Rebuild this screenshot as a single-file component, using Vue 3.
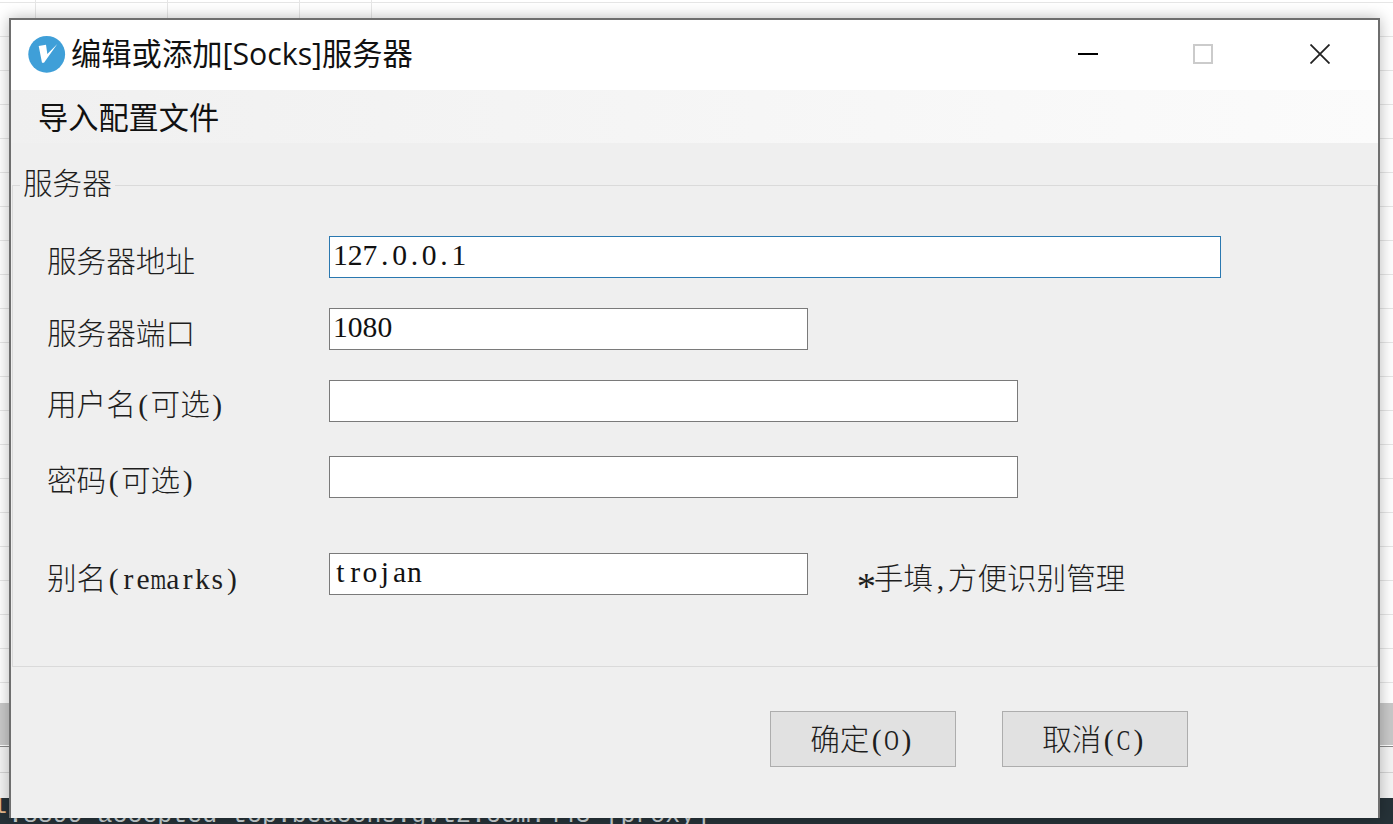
<template>
  <div class="desktop">
    <div class="sheet"></div>
    <div class="tabbar"></div>
    <div class="statusbar"></div>
    <div class="terminal">
      <span class="prev-char">l</span>
      <span class="log-line">.8899 accepted tcp.beacons.gvt2.com:443 [proxy]</span>
    </div>

    <div class="window">
      <div class="titlebar">
        <svg class="logo" width="38" height="38" viewBox="0 0 38 38">
          <circle cx="18.7" cy="19.3" r="18.4" fill="#3f9fd8" />
          <path d="M10.7 11 L18 9.7 L19.3 19 L29.3 9 L16 27.7 L14 27.7 Z" fill="#fff" />
        </svg>
        <span class="title">编辑或添加[Socks]服务器</span>
        <div class="controls">
          <div class="ctl ctl-min"><span class="min-line"></span></div>
          <div class="ctl ctl-max"><span class="max-box"></span></div>
          <div class="ctl ctl-close">
            <svg width="20" height="20" viewBox="0 0 20 20">
              <path d="M0.5 0.5 L19.5 19.5 M19.5 0.5 L0.5 19.5" stroke="#222" stroke-width="1.8" fill="none" />
            </svg>
          </div>
        </div>
      </div>

      <div class="menubar">
        <span class="menu-item">导入配置文件</span>
      </div>

      <div class="content">
        <fieldset class="group">
          <legend>服务器</legend>
          <div v-for="row in rows" :key="row.id" class="row" :class="row.id">
            <label class="label"><span v-for="(c, i) in row.label" :key="i" :class="charClass(c)">{{ c }}</span></label>
            <div class="field" :class="row.field"><span v-for="(c, i) in row.value" :key="i" :class="charClass(c)">{{ c }}</span></div>
            <span v-if="row.note" class="note"><span v-for="(c, i) in row.note" :key="i" :class="charClass(c)">{{ c }}</span></span>
          </div>
        </fieldset>

        <div class="actions">
          <button v-for="b in buttons" :key="b" class="btn"><span v-for="(c, i) in b" :key="i" :class="charClass(c)">{{ c }}</span></button>
        </div>
      </div>
    </div>
  </div>
</template>

<script setup>
const rows = [
  { id: 'r-addr', label: '服务器地址', value: '127.0.0.1', field: 'wide focus' },
  { id: 'r-port', label: '服务器端口', value: '1080', field: 'short' },
  { id: 'r-user', label: '用户名(可选)', value: '', field: 'mid' },
  { id: 'r-pass', label: '密码(可选)', value: '', field: 'mid' },
  { id: 'r-name', label: '别名(remarks)', value: 'trojan', field: 'short', note: '*手填,方便识别管理' }
]
const buttons = ['确定(O)', '取消(C)']

const charClass = (c) => {
  if (c === '*') return 'half star'
  if ('mOC'.includes(c)) return 'half squeeze'
  return c.charCodeAt(0) < 128 ? 'half' : ''
}
</script>

<style>
html, body { margin: 0; padding: 0; background: #fff; }
</style>

<style scoped>
.desktop {
  position: relative;
  width: 1393px;
  height: 824px;
  overflow: hidden;
  display: flex;
  flex-direction: column;
  background: #fff;
}
.sheet {
  height: 703px;
  background-color: #fff;
  background-image:
    repeating-linear-gradient(to bottom, #e6e6e6 0, #e6e6e6 1px, transparent 1px, transparent 34px),
    linear-gradient(#e6e6e6, #e6e6e6),
    linear-gradient(#e6e6e6, #e6e6e6),
    linear-gradient(#e6e6e6, #e6e6e6),
    linear-gradient(#e6e6e6, #e6e6e6);
  background-size: 100% 100%, 1px 100%, 1px 100%, 1px 100%, 1px 100%;
  background-position: 0 2px, 35px 0, 167px 0, 299px 0, 371px 0;
  background-repeat: repeat, no-repeat, no-repeat, no-repeat, no-repeat;
}
.tabbar {
  height: 42px;
  background: #c9c9c9;
  border-bottom: 1px solid #fff;
}
.statusbar {
  height: 51px;
  border-top: 1px solid #8a8a8a;
  background: #f4f4f4;
  background-image: linear-gradient(to bottom, transparent 25px, #d4d4d4 25px, #d4d4d4 26px, transparent 26px);
}
.terminal {
  flex: 1;
  position: relative;
  background: #263238;
  overflow: hidden;
}
.prev-char {
  position: absolute;
  left: -8px;
  top: -6px;
  font: 25px "Liberation Mono", monospace;
  color: #e3b98d;
}
.log-line {
  position: absolute;
  left: 8px;
  top: 3px;
  font: 24.9px "Liberation Mono", monospace;
  color: #c8d0d2;
  white-space: pre;
}

.window {
  position: absolute;
  left: 9px;
  top: 18px;
  width: 1371px;
  height: 800px;
  box-sizing: border-box;
  border: 2px solid #6e6e6e;
  border-bottom: none;
  background: #efefef;
  display: flex;
  flex-direction: column;
  box-shadow: 0 0 14px rgba(0, 0, 0, 0.28);
}
.titlebar {
  height: 70px;
  background: #fff;
  display: flex;
  align-items: center;
  padding-left: 17px;
  flex-shrink: 0;
}
.logo { flex-shrink: 0; margin-bottom: 3px; }
.title {
  margin-left: 5px;
  margin-bottom: 7px;
  font-family: "Open Sans", "Noto Sans CJK SC", sans-serif;
  font-size: 30.3px;
  color: #111;
  white-space: nowrap;
}
.controls { margin-left: auto; display: flex; height: 100%; margin-bottom: 3px; }
.ctl { display: flex; align-items: center; justify-content: center; height: 100%; }
.ctl-min { width: 112px; }
.ctl-max { width: 118px; }
.ctl-close { width: 116px; }
.min-line { display: block; width: 20px; height: 2px; background: #000; }
.max-box { display: block; width: 20px; height: 20px; box-sizing: border-box; border: 2px solid #cbcbcb; }

.menubar {
  height: 53px;
  flex-shrink: 0;
  display: flex;
  align-items: center;
  background: linear-gradient(to right, #f0f0f0, #fbfbfb);
  padding-left: 27px;
}
.menu-item {
  margin-bottom: 2px;
  font-family: "Noto Sans CJK SC", sans-serif;
  font-size: 30.2px;
  color: #111;
}

.content {
  flex: 1;
  font-family: "Noto Sans CJK SC", sans-serif;
  font-size: 29.6px;
  font-weight: 300;
  color: #1e1e1e;
}
.group {
  margin: 24px 0 0 1px;
  padding: 0;
  width: 1366px;
  height: 500px;
  box-sizing: border-box;
  border: 1px solid #dadada;
  min-width: 0;
}
.group legend {
  margin-left: 7px;
  padding: 0 3px 8px;
  font-size: 29.6px;
  line-height: 1;
}
.row {
  display: flex;
  align-items: center;
  height: 42px;
  padding-left: 34px;
}
.r-addr { margin-top: 31px; }
.r-port { margin-top: 30px; }
.r-user { margin-top: 30px; }
.r-pass { margin-top: 34px; }
.r-name { margin-top: 55px; }

.label {
  width: 282px;
  flex-shrink: 0;
  white-space: nowrap;
  line-height: 42px;
  margin-top: 7px;
}
.r-addr .label { margin-top: 6px; }
.r-name .label { margin-top: 9px; }

.half {
  display: inline-flex;
  justify-content: center;
  width: 14.8px;
  font-family: "Liberation Serif", serif;
  font-weight: 400;
}
.squeeze { transform: scaleX(0.68); }
.star { transform: translateY(7px) scale(1.3); }

.field {
  height: 42px;
  box-sizing: border-box;
  border: 1px solid #7a7a7a;
  background: #fff;
  padding: 0 3px;
  line-height: 32px;
  white-space: nowrap;
  color: #111;
}
.field.wide { width: 892px; }
.field.short { width: 479px; }
.field.mid { width: 689px; }
.field.focus { border-color: #2a78b0; }
.note {
  margin-left: 51px;
  white-space: nowrap;
  line-height: 42px;
  margin-top: 9px;
}

.actions {
  display: flex;
  gap: 46px;
  padding-left: 759px;
  margin-top: 44px;
}
.btn {
  width: 186px;
  height: 56px;
  box-sizing: border-box;
  border: 1px solid #adadad;
  background: #e1e1e1;
  padding: 0 2px 3px 0;
  border-radius: 0;
  font: inherit;
  color: #1e1e1e;
}
</style>
